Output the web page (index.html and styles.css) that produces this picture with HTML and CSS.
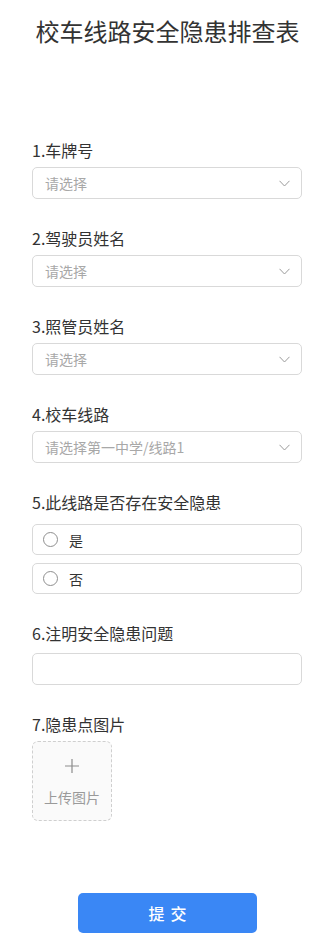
FILE: index.html
```html
<!DOCTYPE html>
<html lang="zh-CN">
<head>
<meta charset="utf-8">
<title>校车线路安全隐患排查表</title>
<link rel="stylesheet" href="styles.css">
</head>
<body>
<div class="page">
  <h1 class="title">校车线路安全隐患排查表</h1>
  <form class="form">
    <div class="field">
      <div class="label">1.车牌号</div>
      <div class="select"><span class="placeholder">请选择</span><svg class="chev" width="11" height="7" viewBox="0 0 11 7"><path d="M0.5 0.8 L5.5 6 L10.5 0.8" fill="none" stroke="#9a9a9a" stroke-width="1"/></svg></div>
    </div>
    <div class="field">
      <div class="label">2.驾驶员姓名</div>
      <div class="select"><span class="placeholder">请选择</span><svg class="chev" width="11" height="7" viewBox="0 0 11 7"><path d="M0.5 0.8 L5.5 6 L10.5 0.8" fill="none" stroke="#9a9a9a" stroke-width="1"/></svg></div>
    </div>
    <div class="field">
      <div class="label">3.照管员姓名</div>
      <div class="select"><span class="placeholder">请选择</span><svg class="chev" width="11" height="7" viewBox="0 0 11 7"><path d="M0.5 0.8 L5.5 6 L10.5 0.8" fill="none" stroke="#9a9a9a" stroke-width="1"/></svg></div>
    </div>
    <div class="field">
      <div class="label">4.校车线路</div>
      <div class="select"><span class="placeholder">请选择第一中学/线路1</span><svg class="chev" width="11" height="7" viewBox="0 0 11 7"><path d="M0.5 0.8 L5.5 6 L10.5 0.8" fill="none" stroke="#9a9a9a" stroke-width="1"/></svg></div>
    </div>
    <div class="field">
      <div class="label label-radio">5.此线路是否存在安全隐患</div>
      <div class="radios">
        <div class="radio"><span class="circle"></span><span class="radio-text">是</span></div>
        <div class="radio"><span class="circle"></span><span class="radio-text">否</span></div>
      </div>
    </div>
    <div class="field">
      <div class="label label-input">6.注明安全隐患问题</div>
      <div class="input"></div>
    </div>
    <div class="field field-last">
      <div class="label">7.隐患点图片</div>
      <div class="upload">
        <svg class="plus" width="14" height="14" viewBox="0 0 14 14"><path d="M7 0 V14 M0 7 H14" stroke="#8c8c8c" stroke-width="1.2" fill="none"/></svg>
        <span class="upload-text">上传图片</span>
      </div>
    </div>
    <div class="actions">
      <div class="submit">提交</div>
    </div>
  </form>
</div>
</body>
</html>
```

FILE: styles.css
```css
* { box-sizing: border-box; }
html, body { margin: 0; padding: 0; background: #fff; }
body {
  font-family: "Noto Sans CJK SC", "Noto Sans", sans-serif;
  color: #333;
  width: 335px;
}
.page { padding: 19px 33px 0 32px; }
.title {
  margin: 0;
  font-size: 24px;
  line-height: 24px;
  font-weight: 400;
  color: #333;
  text-align: center;
  padding-left: 1px;
}
.form { margin-top: 97px; display: flex; flex-direction: column; }
.field { display: flex; flex-direction: column; margin-bottom: 29px; }
.field-last { margin-bottom: 0; }
.label {
  font-size: 16px;
  line-height: 20px;
  height: 20px;
  color: #333;
  margin-bottom: 7px;
}
.label-radio { margin-bottom: 12px; }
.label-input { margin-bottom: 10px; }
.select {
  height: 32px;
  border: 1px solid #d9d9d9;
  border-radius: 5px;
  display: flex;
  align-items: center;
  justify-content: space-between;
  padding: 0 11px 0 12px;
}
.placeholder { font-size: 14px; color: #a8a8a8; line-height: 20px; }
.chev { display: block; }
.radios { display: flex; flex-direction: column; gap: 8px; }
.radio {
  height: 31px;
  border: 1px solid #d9d9d9;
  border-radius: 5px;
  display: flex;
  align-items: center;
  padding-left: 10px;
}
.circle {
  width: 15px;
  height: 15px;
  border: 1px solid #8f8f8f;
  border-radius: 50%;
  margin-right: 11px;
}
.radio-text { font-size: 14px; color: #333; line-height: 20px; }
.input {
  height: 32px;
  border: 1px solid #d9d9d9;
  border-radius: 5px;
}
.upload {
  width: 80px;
  height: 80px;
  border: 1px dashed #cfcfcf;
  border-radius: 6px;
  background: #fafafa;
  display: flex;
  flex-direction: column;
  align-items: center;
  padding-top: 17px;
  gap: 15px;
}
.plus { display: block; }
.upload-text { font-size: 14px; line-height: 18px; color: #9a9a9a; }
.actions { display: flex; justify-content: center; margin-top: 72px; padding-left: 1px; }
.submit {
  width: 179px;
  height: 40px;
  background: #3a87f5;
  border-radius: 5px;
  color: #fff;
  font-size: 16px;
  font-weight: 500;
  display: flex;
  align-items: center;
  justify-content: center;
  letter-spacing: 6px;
  padding-left: 6px;
}
```
